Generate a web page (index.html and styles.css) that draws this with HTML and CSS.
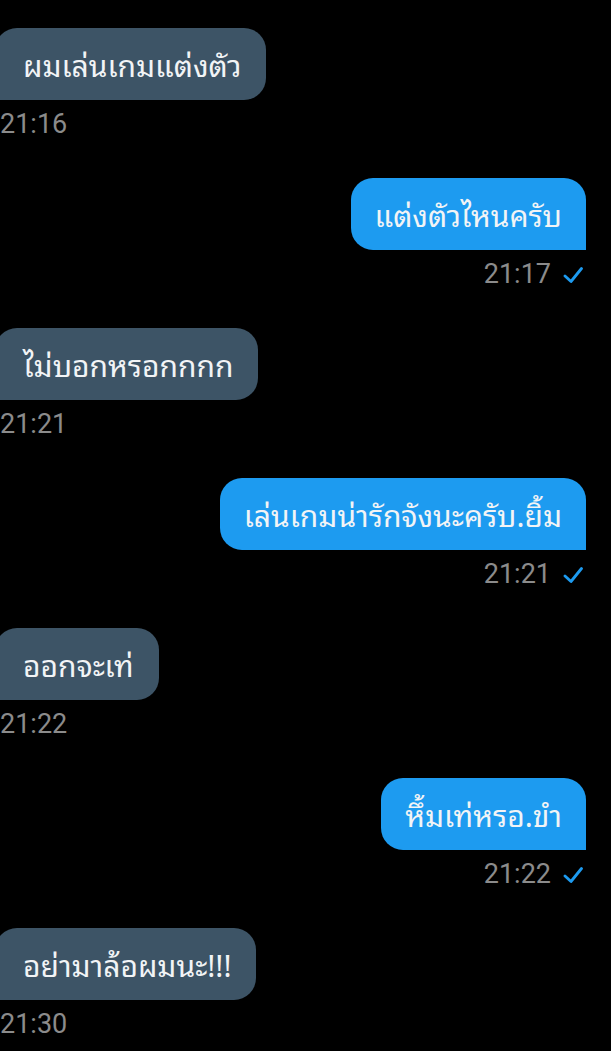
FILE: index.html
```html
<!DOCTYPE html>
<html lang="th">
<head>
<meta charset="utf-8">
<link rel="stylesheet" href="styles.css">
</head>
<body>
<div class="chat">
  <div class="msg in">
    <div class="bubble">ผมเล่นเกมแต่งตัว</div>
    <div class="meta"><span class="time">21:16</span></div>
  </div>
  <div class="msg out">
    <div class="bubble">แต่งตัวไหนครับ</div>
    <div class="meta"><span class="time">21:17</span><svg class="tick" viewBox="0 0 20 16" width="20" height="16"><path d="M2 9 L8 14.5 L18.5 1.5" fill="none" stroke="#1d9bf0" stroke-width="2.8" stroke-linecap="round" stroke-linejoin="round"/></svg></div>
  </div>
  <div class="msg in">
    <div class="bubble">ไม่บอกหรอกกกก</div>
    <div class="meta"><span class="time">21:21</span></div>
  </div>
  <div class="msg out">
    <div class="bubble">เล่นเกมน่ารักจังนะครับ.ยิ้ม</div>
    <div class="meta"><span class="time">21:21</span><svg class="tick" viewBox="0 0 20 16" width="20" height="16"><path d="M2 9 L8 14.5 L18.5 1.5" fill="none" stroke="#1d9bf0" stroke-width="2.8" stroke-linecap="round" stroke-linejoin="round"/></svg></div>
  </div>
  <div class="msg in">
    <div class="bubble">ออกจะเท่</div>
    <div class="meta"><span class="time">21:22</span></div>
  </div>
  <div class="msg out">
    <div class="bubble">หึ้มเท่หรอ.ขำ</div>
    <div class="meta"><span class="time">21:22</span><svg class="tick" viewBox="0 0 20 16" width="20" height="16"><path d="M2 9 L8 14.5 L18.5 1.5" fill="none" stroke="#1d9bf0" stroke-width="2.8" stroke-linecap="round" stroke-linejoin="round"/></svg></div>
  </div>
  <div class="msg in">
    <div class="bubble">อย่ามาล้อผมนะ!!!</div>
    <div class="meta"><span class="time">21:30</span></div>
  </div>
</div>
</body>
</html>
```

FILE: styles.css
```css
html, body {
  margin: 0;
  padding: 0;
  background: #000;
  overflow: hidden;
}
body {
  width: 611px;
  height: 1051px;
  font-family: "Noto Sans Thai Looped", "Noto Looped Thai", "Loma", "Garuda", "Noto Sans", "Noto Sans Thai", Roboto, sans-serif;
}
.chat {
  display: flex;
  flex-direction: column;
  padding-top: 28px;
}
.msg {
  display: flex;
  flex-direction: column;
  height: 150px;
}
.msg.in {
  align-items: flex-start;
  margin-left: -5px;
}
.msg.out {
  align-items: flex-end;
  margin-right: 25px;
}
.bubble {
  height: 72px;
  box-sizing: border-box;
  display: flex;
  align-items: center;
  padding: 0 25px 2px 28px;
  font-size: 30px;
  color: #f2f4f6;
  border-radius: 22px;
  white-space: nowrap;
}
.msg.in .bubble {
  background: #3d5466;
  border-bottom-left-radius: 0;
}
.msg.out .bubble {
  background: #1d9bf0;
  border-bottom-right-radius: 0;
  padding: 0 24px 2px;
}
.meta {
  display: flex;
  align-items: center;
  gap: 12px;
  margin-top: 9px;
  height: 30px;
}
.msg.in .meta {
  padding-left: 5px;
}
.msg.out .meta {
  padding-right: 3px;
}
.time {
  font-family: Roboto, "Liberation Sans", sans-serif;
  font-size: 27px;
  line-height: 30px;
  color: #8b8b8b;
}
.tick {
  display: block;
  margin-top: 2px;
}
```
